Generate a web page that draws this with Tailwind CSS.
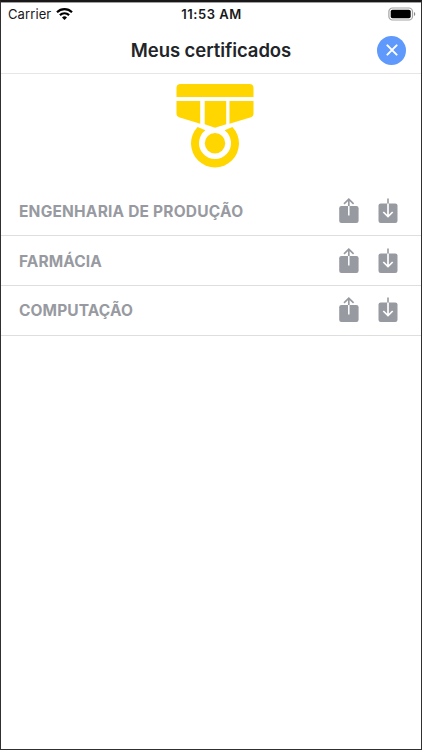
<!DOCTYPE html>
<html lang="pt-BR">
<head>
    <meta charset="UTF-8">
    <meta name="viewport" content="width=device-width, initial-scale=1.0">
    <title>Meus certificados</title>
    <script src="https://cdn.jsdelivr.net/npm/@tailwindcss/browser@4"></script>
</head>
<body class="h-[750px] overflow-hidden bg-white font-['Inter',sans-serif] flex flex-col border border-t-2 border-[#303033] border-t-[#1a1718]">
    <!-- Ícones reutilizados nas linhas -->
    <svg class="hidden">
        <symbol id="share" viewBox="0 0 20 26">
            <rect x="0.2" y="8" width="19.4" height="17" rx="2.2" fill="#989aa1"/>
            <path d="M9.8 8V1.2M5 5.8L9.8 1.2l4.8 4.6" fill="none" stroke="#989aa1" stroke-width="1.7"/>
            <path d="M9.8 8v9.4" stroke="#fff" stroke-width="1.5"/>
        </symbol>
        <symbol id="download" viewBox="0 0 20 26">
            <rect x="0.5" y="5.4" width="19" height="19.6" rx="2.2" fill="#989aa1"/>
            <path d="M10 0.5V6" stroke="#989aa1" stroke-width="1.6"/>
            <path d="M10 5.4v13M5.3 14l4.7 4.6 4.7-4.6" fill="none" stroke="#fff" stroke-width="1.7"/>
        </symbol>
    </svg>

    <!-- Barra de status -->
    <div class="h-6 shrink-0 grid grid-cols-3 items-center border-t border-[#a0a0a0] pl-[7px] pr-[5px] text-[#18181a]">
        <div class="flex items-center gap-[5px] -mt-px">
            <span class="text-[13px] leading-4 tracking-[0.1px]">Carrier</span>
            <svg class="w-[17px] h-3" viewBox="0 0 17 12">
                <g fill="none" stroke="#000" stroke-width="2.2">
                    <path d="M1 4.2a10.8 10.8 0 0 1 15 0"/>
                    <path d="M3.9 7.1a6.6 6.6 0 0 1 9.2 0"/>
                </g>
                <path d="M8.5 12L6 9.5a3.6 3.6 0 0 1 5 0z"/>
            </svg>
        </div>
        <span class="-ml-px -mt-px text-center text-[13px] leading-4 font-semibold tracking-[0.5px]">11:53 AM</span>
        <svg class="w-[28px] h-[14px] -mt-px justify-self-end" viewBox="0 0 28 14">
            <rect x="0.9" y="1" width="23.6" height="12" rx="3.6" fill="#fff" stroke="#a3a3a3" stroke-width="1.2"/>
            <rect x="2.7" y="2.8" width="20" height="8.4" rx="1.8"/>
            <path d="M26 5v4a2.2 2.2 0 0 0 0-4z" fill="#8a8a8a"/>
        </svg>
    </div>

    <!-- Cabeçalho -->
    <header class="h-12 shrink-0 grid grid-cols-[1fr_auto_1fr] items-center border-b border-[#e6e6e6] pt-px pr-[15px]">
        <h1 class="col-start-2 ml-[15px] -mt-px text-[18.5px] leading-6 font-semibold tracking-[-0.08px] text-[#222428]">Meus certificados</h1>
        <button type="button" class="justify-self-end size-[29px] rounded-full bg-[#5e99fb] flex items-center justify-center">
            <svg class="size-3" viewBox="0 0 12 12">
                <path d="M1.4 1.4l9.2 9.2M10.6 1.4l-9.2 9.2" stroke="#fff" stroke-width="2" stroke-linecap="round"/>
            </svg>
        </button>
    </header>

    <!-- Medalha -->
    <div class="h-[112px] shrink-0 flex justify-center pt-[10px]">
        <svg class="w-[78px] h-[84px] ml-[8px]" viewBox="0 0 78 84" fill="#ffd600">
            <path d="M4.5 0h69a4 4 0 0 1 4 4v9H.5V4a4 4 0 0 1 4-4z"/>
            <path d="M.5 17h23.7v22.7L3 33.3a3.5 3.5 0 0 1-2.5-3.4z"/>
            <path d="M28.7 17h21.5v23.3l-11.2 3.4-10.3-3.4z"/>
            <path d="M53.5 17h24v12.9a3.5 3.5 0 0 1-2.5 3.4l-21.5 6.4z"/>
            <path d="M21.6 42.9a24 24 0 1 0 34.8 0l-7.8 3.4a16 16 0 1 1-19.2 0z"/>
            <circle cx="39" cy="59.2" r="10.2"/>
        </svg>
    </div>

    <!-- Lista de certificados -->
    <ul class="text-[15.5px] font-bold text-[#989aa1]">
        <li class="h-[50px] flex items-center border-b border-[#dedede] pl-[18px] pr-[23px]">
            <span class="flex-1 pt-[2px] tracking-[0.2px]">ENGENHARIA DE PRODUÇÃO</span>
            <svg class="w-5 h-[26px] mr-[19px]"><use href="#share"/></svg>
            <svg class="w-5 h-[26px]"><use href="#download"/></svg>
        </li>
        <li class="h-[50px] flex items-center border-b border-[#dedede] pl-[18px] pr-[23px]">
            <span class="flex-1 pt-[2px] tracking-[0.1px]">FARMÁCIA</span>
            <svg class="w-5 h-[26px] mr-[19px]"><use href="#share"/></svg>
            <svg class="w-5 h-[26px]"><use href="#download"/></svg>
        </li>
        <li class="h-[50px] flex items-center border-b border-[#dedede] pl-[18px] pr-[23px] pb-px">
            <span class="flex-1 pt-[2px] tracking-[0.1px]">COMPUTAÇÃO</span>
            <svg class="w-5 h-[26px] mr-[19px]"><use href="#share"/></svg>
            <svg class="w-5 h-[26px]"><use href="#download"/></svg>
        </li>
    </ul>
</body>
</html>
